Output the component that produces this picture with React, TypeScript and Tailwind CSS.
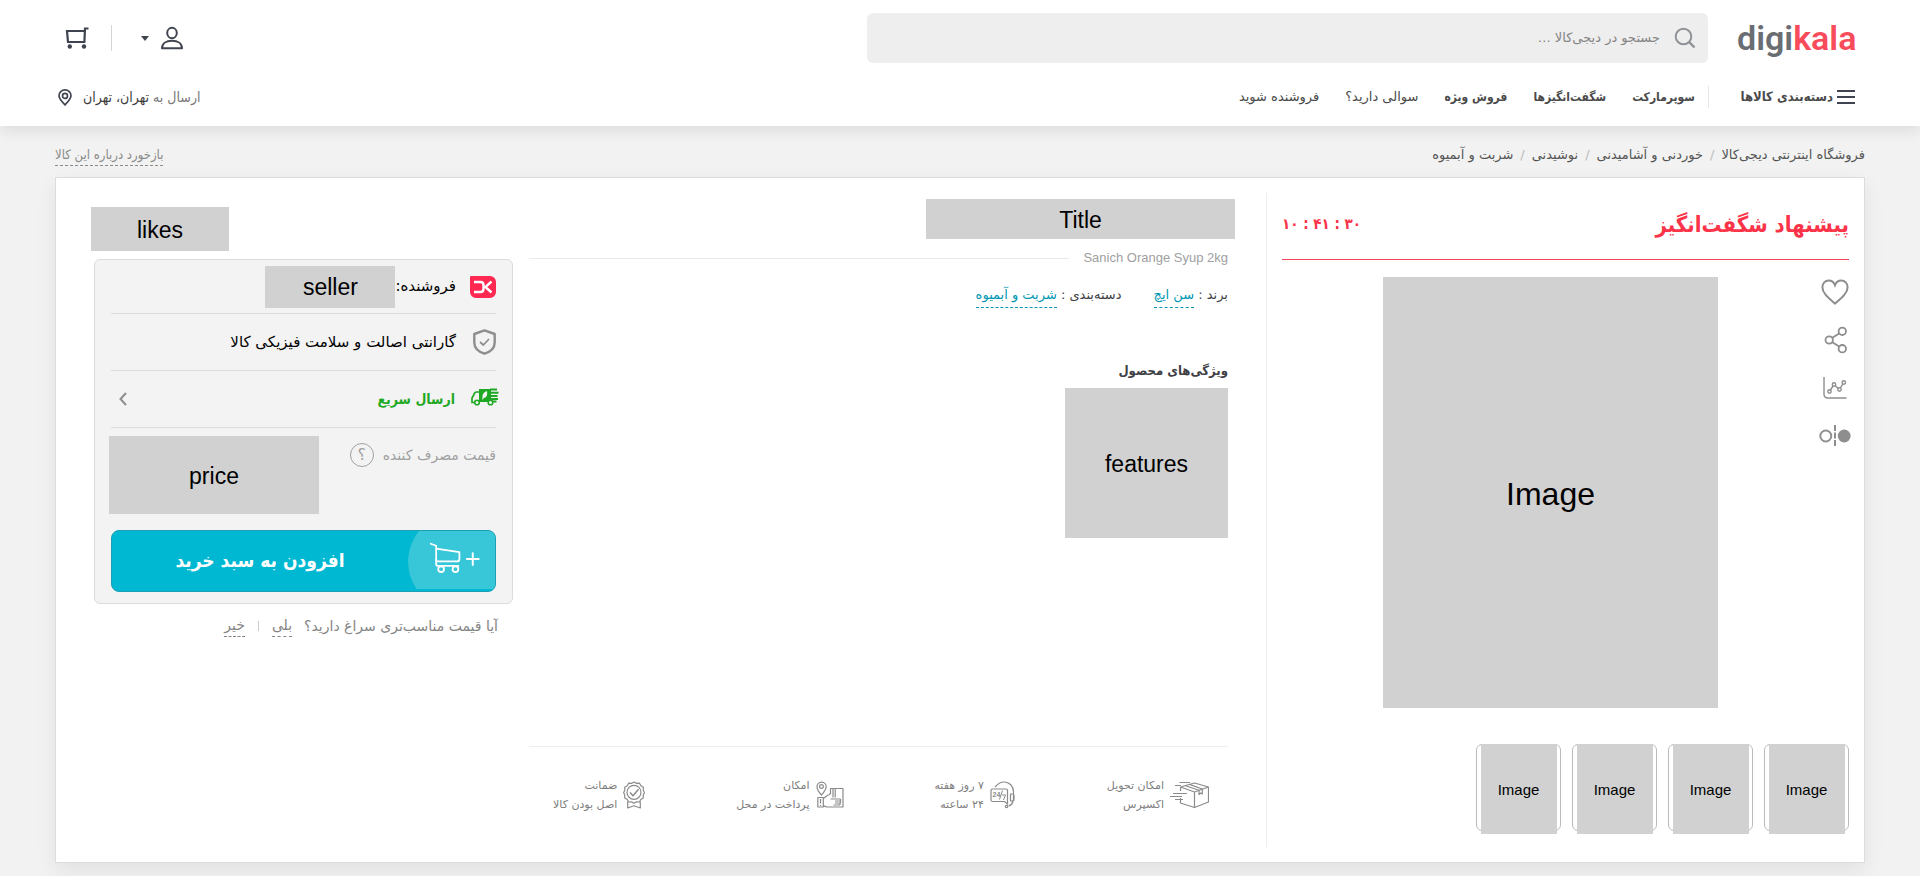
import React from "react";

const navLinks = [
  { label: "سوپرمارکت", bold: true },
  { label: "شگفت‌انگیزها", bold: true },
  { label: "فروش ویژه", bold: true },
  { label: "سوالی دارید؟", bold: false },
  { label: "فروشنده شوید", bold: false },
];

const crumbs = ["فروشگاه اینترنتی دیجی‌کالا", "خوردنی و آشامیدنی", "نوشیدنی", "شربت و آبمیوه"];

function SearchIcon() {
  return (
    <svg width="22" height="22" viewBox="0 0 22 22" fill="none" stroke="#8f9296" strokeWidth="2">
      <circle cx="9.5" cy="9.5" r="7.8" />
      <path d="M15.2 15.2 20.5 20.5" strokeWidth="2.4" />
    </svg>
  );
}

function UserIcon() {
  return (
    <svg width="24" height="24" viewBox="0 0 24 24" fill="none" stroke="#3f4450" strokeWidth="2">
      <ellipse cx="12" cy="7" rx="4.8" ry="5.2" />
      <path d="M2 22.2c0-4.6 4.2-7.4 10-7.4s10 2.8 10 7.4z" strokeLinejoin="round" />
    </svg>
  );
}

function CartIcon() {
  return (
    <svg width="24" height="24" viewBox="0 0 24 24" fill="none" stroke="#3f4450" strokeWidth="2.2">
      <path d="M23.5 2.5H20l-.6 13.5H3L2 5h18" />
      <circle cx="4.8" cy="20.5" r="2.2" fill="#3f4450" stroke="none" />
      <circle cx="19" cy="20.5" r="2.2" fill="#3f4450" stroke="none" />
    </svg>
  );
}

function PinIcon() {
  return (
    <svg width="14" height="17" viewBox="0 0 14 17" fill="none" stroke="#3f4450" strokeWidth="1.7">
      <path d="M7 15.8C3.5 12.2 1 9.6 1 6.7a6 5.8 0 0 1 12 0c0 2.9-2.5 5.5-6 9.1z" />
      <circle cx="7" cy="6.9" r="2.5" />
    </svg>
  );
}

function HeartIcon() {
  return (
    <svg width="28" height="26" viewBox="0 0 28 26" fill="none" stroke="#8e8e8e" strokeWidth="2">
      <path d="M14 24.6C8 19.4 1.4 14.5 1.4 8.2 1.4 4.3 4.2 1.5 7.7 1.5c3 0 5.2 1.8 6.3 4.7 1.1-2.9 3.3-4.7 6.3-4.7 3.5 0 6.3 2.8 6.3 6.7 0 6.3-6.6 11.2-12.6 16.4z" />
    </svg>
  );
}

function ShareIcon() {
  return (
    <svg width="24" height="28" viewBox="0 0 24 28" fill="none" stroke="#8e8e8e" strokeWidth="1.8">
      <circle cx="6.2" cy="14" r="3.7" />
      <circle cx="19.3" cy="5.3" r="3.7" />
      <circle cx="19.3" cy="22.7" r="3.7" />
      <path d="M9.3 11.8 16.2 7.4M9.3 16.2l6.9 4.4" />
    </svg>
  );
}

function ChartIcon() {
  return (
    <svg width="24" height="24" viewBox="0 0 24 24" fill="none" stroke="#8e8e8e" strokeWidth="1.4">
      <path d="M1 1v17.5A3.5 3.5 0 0 0 4.5 22H23.5" />
      <circle cx="6.5" cy="15.5" r="1.7" />
      <circle cx="11" cy="8.5" r="1.7" />
      <circle cx="16.5" cy="13.5" r="1.7" />
      <circle cx="20.8" cy="6.5" r="1.7" />
      <path d="M7.4 14 10.1 10M12.3 9.7l3 2.7M17.3 12l2.6-4.1" />
    </svg>
  );
}

function CompareIcon() {
  return (
    <svg width="32" height="28" viewBox="0 0 32 28" fill="none" stroke="#8e8e8e">
      <circle cx="6.8" cy="14" r="5.5" strokeWidth="1.9" />
      <circle cx="25.2" cy="14" r="6.4" fill="#8e8e8e" stroke="none" />
      <path d="M16 3v22" strokeWidth="2" strokeDasharray="6 1.5" />
    </svg>
  );
}

function BrandMark() {
  return (
    <svg width="26" height="22" viewBox="0 0 26 22">
      <path d="M0 1.2A1.2 1.2 0 0 1 1.2 0H20a6 6 0 0 1 6 6v10a6 6 0 0 1-6 6H6a6 6 0 0 1-6-6z" fill="#ff2850" />
      <path d="M4 6h6.5q3 0 3 3v4q0 3-3 3H4M21.5 5.5 15.5 11l6 5.5" fill="none" stroke="#fff" strokeWidth="2.4" />
    </svg>
  );
}

function ShieldIcon() {
  return (
    <svg width="23" height="26" viewBox="0 0 23 26" fill="none" stroke="#8e8e8e">
      <path d="M11.5 1.4 21.7 5v8.5c0 5.3-4.3 9.3-10.2 11.2C5.6 22.8 1.3 18.8 1.3 13.5V5z" strokeWidth="2.4" strokeLinejoin="round" />
      <path d="m7 13 3.3 3 5.7-6" strokeWidth="1.7" />
    </svg>
  );
}

function TruckIcon() {
  return (
    <svg className="-mr-[3px] mb-1" width="28" height="18" viewBox="0 0 28 18">
      <path d="M8 1h12v13H8z" fill="#1fa824" />
      <path d="M19 1.5h7M19 4.8h8.5M19 8h7.5M19 11h8M19 13.5h6.5" stroke="#1fa824" strokeWidth="1.9" />
      <path d="M9 4H5.5Q3.5 4 2.5 7.5L1 10v4.5h8" fill="none" stroke="#1fa824" strokeWidth="1.7" />
      <path d="M16 3Q11 4.5 11.5 9.5L11 12l2-2q4-1 3-7z" fill="#f3f3f3" />
      <circle cx="6" cy="14.5" r="2.3" fill="#f3f3f3" stroke="#1fa824" strokeWidth="1.6" />
      <circle cx="19.5" cy="14.5" r="2.3" fill="#f3f3f3" stroke="#1fa824" strokeWidth="1.6" />
    </svg>
  );
}

function BuyCartIcon() {
  return (
    <svg className="absolute inset-0 h-full w-full" viewBox="0 0 88 60" preserveAspectRatio="none" fill="none" stroke="#fff" strokeWidth="1.8" strokeLinejoin="round" strokeLinecap="round">
      <path d="M11 0A50 50 0 0 0 8.5 59H88V0z" fill="#38c6d9" stroke="none" />
      <path d="M23 13l5.500 2v14.500q0 1.500 1.500 1.500h19.500q2.500 0 2.500-2.500v-7L28.500 18" />
      <path d="M28.500 29v4.500q0 2 2 2H51" />
      <circle cx="33.500" cy="38.800" r="2.900" />
      <circle cx="48" cy="38.800" r="2.900" />
      <path d="M59.500 28.500h12M65.500 22.500v12" strokeWidth="2" />
    </svg>
  );
}

function ExpressIcon() {
  return (
    <svg width="39" height="28" viewBox="0 0 39 28" fill="none" stroke="#8b8b8b" strokeWidth="1.2" strokeLinejoin="round">
      <path d="M10.5 6 24.5 2l14 4v15l-14 5.5L10.5 22v-5M10.5 6l14 5 14-5M24.5 11v15.5M10.5 6v4" />
      <path d="M15.5 4.7 29 9.3v4.200l1.800-1.500 1.500 1V8L19.500 3.400" />
      <path d="M9.5 1.5H20M5 4.5h6M3 12.500h14M0 15.500h12M5 18.500h8" />
    </svg>
  );
}

function SupportIcon() {
  return (
    <svg width="26" height="28" viewBox="0 0 26 28" fill="none" stroke="#8b8b8b" strokeWidth="1.2">
      <path d="M5 6C8 2.5 11 1 14 1c5.5 0 9.5 4 9.5 10v9" />
      <path d="M1 9.500q0-1.500 1.500-1.500H16q1.500 0 1.500 1.500v13.500L14.500 20.500H2.500Q1 20.500 1 19z" />
      <path d="M20.5 13h1.500q2 0 2 2v3q0 2-2 2h-1.500zM23 20.500Q22 24 18.500 25" />
      <circle cx="16.5" cy="25.5" r="1.2" />
      <text x="2.5" y="15.5" direction="ltr" fontFamily="Liberation Sans" fontSize="7" fontWeight="700" fill="#8b8b8b" stroke="none">24</text>
      <path d="M12.5 9.5 9.5 18.5M12 14h3.500l-2 5" strokeWidth="1" />
    </svg>
  );
}

function PaymentIcon() {
  return (
    <svg width="28" height="28" viewBox="0 0 28 28" fill="none" stroke="#8b8b8b" strokeWidth="1.2" strokeLinejoin="round">
      <path d="M5.500 14C2.500 10.800 1 8.500 1 5.700a4.600 4.600 0 0 1 9.200 0c0 2.800-2 5.100-4.700 8.300z" />
      <circle cx="5.5" cy="5.5" r="1.9" />
      <path d="M1.800 16.500h5.500V26H1.800zM4.500 18v4.500M4.500 24v1M7.300 17.500l4-3 3-1.500M7.500 24.500q2 1.500 4 1.500H27V7.500H14.500V13M14.500 13h-1.500M17 7.500v9M19.200 7.500v9" />
      <path d="M14.500 18h9.500q1.500 1 0 2h-5M24 20q1.300 1 0 2h-5M23.500 22q1.300 1 0 2h-6" />
    </svg>
  );
}

function MedalIcon() {
  return (
    <svg width="22" height="28" viewBox="0 0 22 28" fill="none" stroke="#8b8b8b" strokeWidth="1.2" strokeLinejoin="round">
      <path d="M11 1l2.600 1.400 2.900-.2 1.400 2.600 2.500 1.500-.2 2.900L21.500 11.500l-1.300 2.500.1 3-2.500 1.500-1.400 2.500-3-.1L11 22.200 8.600 20.900l-3 .1-1.400-2.500-2.500-1.500.1-3L.6 11.500l1.300-2.300-.2-2.900 2.500-1.500 1.400-2.600 2.900.2z" />
      <circle cx="11" cy="11.3" r="7" />
      <path d="m7 11.5 3 3.2 5.5-6.5" strokeWidth="1.5" />
      <path d="M4.7 20.5V27L11 24.8 17.300 27v-6.500" />
    </svg>
  );
}

const services = [
  { icon: <ExpressIcon />, lines: ["امکان تحویل", "اکسپرس"] },
  { icon: <SupportIcon />, lines: ["۷ روز هفته", "۲۴ ساعته"] },
  { icon: <PaymentIcon />, lines: ["امکان", "پرداخت در محل"] },
  { icon: <MedalIcon />, lines: ["ضمانت", "اصل بودن کالا"] },
];

function Block({ className, children }: { className: string; children: React.ReactNode }) {
  return (
    <div className={`flex shrink-0 items-center justify-center bg-[#d1d1d1] pt-[2px] font-['Liberation_Sans'] text-black ${className}`}>
      {children}
    </div>
  );
}

function Header() {
  return (
    <header className="relative bg-white px-[65px] pt-[13px] shadow-[0_5px_14px_rgba(0,0,0,0.09)]">
      <div className="flex h-[50px] items-center">
        <a href="#" dir="ltr" className="w-[147px] pl-[29px] font-['Roboto'] text-[34px] leading-[40px] font-semibold text-[#6a6e73]">
          digi<span className="text-[#f84c5c]">kala</span>
        </a>
        <label className="flex h-full w-[47%] max-w-[841px] items-center gap-[14px] rounded-md bg-[#eee] pr-[12px] pl-4">
          <SearchIcon />
          <input
            type="search"
            aria-label="جستجو"
            placeholder="جستجو در دیجی‌کالا …"
            className="min-w-0 flex-1 bg-transparent font-['DejaVu_Sans',sans-serif] text-[13px] outline-none placeholder:text-[#858585]"
          />
        </label>
        <div className="mr-auto flex items-center">
          <button aria-label="حساب کاربری" className="flex items-center gap-[11px]">
            <UserIcon />
            <span className="h-0 w-0 border-x-4 border-t-[5px] border-x-transparent border-t-[#3f4450]" />
          </button>
          <span className="mr-[29px] ml-[22px] h-[26px] w-px bg-[#d5d5d5]" />
          <button aria-label="سبد خرید"><CartIcon /></button>
        </div>
      </div>
      <div className="flex h-[63px] items-center pt-[5px] text-[13px] text-[#4a4a4a]">
        <button className="flex w-[146px] items-center gap-1 font-bold">
          <svg width="18" height="14" viewBox="0 0 18 14" stroke="#3f4450" strokeWidth="1.8">
            <path d="M0 1h18M0 7h18M0 13h18" />
          </svg>
          دسته‌بندی کالاها
        </button>
        <nav className="flex h-[22px] items-center gap-[26px] border-r border-[#e6e6e6] pr-[13px]">
          {navLinks.map((l) => (
            <a key={l.label} href="#" className={l.bold ? "text-[12px] font-bold" : "font-['DejaVu_Sans',sans-serif]"}>{l.label}</a>
          ))}
        </nav>
        <button className="mr-auto -ml-[7px] flex items-center gap-[11px] text-[14px]">
          <span className="text-[#777]">
            ارسال به <span className="text-[#3c3c3c]">تهران، تهران</span>
          </span>
          <PinIcon />
        </button>
      </div>
    </header>
  );
}

function Gallery() {
  return (
    <section className="my-[15px] border-l border-[#eee] px-[15px] pb-4">
      <div className="flex h-[67px] items-center justify-between border-b border-[#f5455c] pb-[3px] text-[#fb3449]">
        <h2 className="text-[22px] leading-7 font-bold">پیشنهاد شگفت‌انگیز</h2>
        <span dir="ltr" className="text-[15px] font-bold">۱۰ : ۴۱ : ۳۰</span>
      </div>
      <div className="flex pt-[17px]">
        <div className="-mr-[2px] flex w-8 flex-col items-center gap-[19px]">
          <button aria-label="علاقه‌مندی" className="flex h-[29px] items-center"><HeartIcon /></button>
          <button aria-label="اشتراک‌گذاری" className="flex h-[29px] items-center"><ShareIcon /></button>
          <button aria-label="نمودار قیمت" className="flex h-[29px] items-center"><ChartIcon /></button>
          <button aria-label="مقایسه" className="flex h-[29px] items-center"><CompareIcon /></button>
        </div>
        <div className="flex flex-1 justify-center">
          <Block className="h-[431px] w-[335px] text-[32px]">Image</Block>
        </div>
      </div>
      <div className="mt-9 flex gap-[11px]">
        {[1, 2, 3, 4].map((n) => (
          <button key={n} className="flex h-[87px] w-[85px] justify-center rounded-md border border-[#bbb]">
            <Block className="-mt-px h-[90px] w-[76px] text-[15px]">Image</Block>
          </button>
        ))}
      </div>
    </section>
  );
}

const dashedLink = "inline-block border-b border-dashed border-[#0097b2] text-[#0097b2]";

function Details() {
  return (
    <section className="flex flex-col pr-[38px] font-['DejaVu_Sans',sans-serif] text-[#3f3f46]">
      <div className="-mr-[7px] mt-[21px]">
        <Block className="h-10 w-[309px] text-[23px]">Title</Block>
      </div>
      <div className="mt-[9px] flex items-center gap-[14px]">
        <span dir="ltr" className="pb-px font-['Liberation_Sans'] text-[13px] leading-5 text-[#a0a0a0]">Sanich Orange Syup 2kg</span>
        <span className="h-px flex-1 bg-[#eaeaea]" />
      </div>
      <div className="mt-[14px] flex gap-8 text-[13px] leading-6">
        <span>برند : <a href="#" className={dashedLink}>سن ایچ</a></span>
        <span>دسته‌بندی : <a href="#" className={dashedLink}>شربت و آبمیوه</a></span>
      </div>
      <h3 className="mt-[51px] font-['DejaVu_Sans_Condensed',sans-serif] text-[13px] leading-6 font-bold">ویژگی‌های محصول</h3>
      <Block className="mt-[5px] h-[150px] w-[163px] text-[23px]">features</Block>
      <ul className="mt-auto mb-12 flex justify-between border-t border-[#eee] pt-[29px] pr-[19px] pl-6 text-[11px] leading-[19px] text-[#7d7d7d]">
        {services.map((s) => (
          <li key={s.lines[0]} className="flex items-center gap-[6px]">
            {s.icon}
            <span>{s.lines[0]}<br />{s.lines[1]}</span>
          </li>
        ))}
      </ul>
    </section>
  );
}

function BuyBox() {
  return (
    <section className="pr-4 pl-[38px] font-['DejaVu_Sans',sans-serif]">
      <div className="mt-[29px] -ml-[3px] flex justify-end">
        <Block className="h-11 w-[138px] text-[23px]">likes</Block>
      </div>
      <div className="mt-2 rounded-md border border-[#dcdcdc] bg-[#f3f3f3] px-4 pb-[11px] text-[15px] text-black">
        <div className="flex h-[54px] items-center border-b border-[#dcdcdc]">
          <BrandMark />
          <span className="mr-[14px]">فروشنده:</span>
          <Block className="h-[42px] w-[130px] text-[23px]">seller</Block>
        </div>
        <div className="flex h-[57px] items-center gap-[17px] border-b border-[#dcdcdc]">
          <ShieldIcon />
          <span>گارانتی اصالت و سلامت فیزیکی کالا</span>
        </div>
        <button className="flex h-[57px] w-full items-center border-b border-[#dcdcdc] font-['DejaVu_Sans_Condensed',sans-serif] text-[14px] font-bold text-[#1fa824]">
          <TruckIcon />
          <span className="mr-4">ارسال سریع</span>
          <svg className="mr-auto ml-2" width="8" height="14" viewBox="0 0 8 14" fill="none" stroke="#8e8e8e" strokeWidth="2">
            <path d="M7 1 1.500 7 7 13" />
          </svg>
        </button>
        <div className="flex justify-between pt-2">
          <div className="flex h-[38px] items-center gap-[9px] text-[14px] text-[#a0a0a0]">
            قیمت مصرف کننده
            <span className="flex h-6 w-6 items-center justify-center rounded-full border border-[#a0a0a0] text-[16px]">؟</span>
          </div>
          <Block className="-ml-[2px] h-[78px] w-[210px] text-[23px]">price</Block>
        </div>
        <button className="mt-4 flex h-[62px] w-full overflow-hidden rounded-lg border border-[#1c9fb3] bg-[#00b8d1] pb-px font-['DejaVu_Sans_Condensed',sans-serif] text-[19px] font-bold text-white">
          <span className="relative h-full w-[87px]"><BuyCartIcon /></span>
          <span className="flex-1 self-center">افزودن به سبد خرید</span>
        </button>
      </div>
      <div className="mt-[10px] flex items-center pr-[15px] text-[14px] leading-[22px] text-[#858585]">
        <span>آیا قیمت مناسب‌تری سراغ دارید؟</span>
        <a href="#" className="mr-3 border-b border-dashed border-[#858585]">بلی</a>
        <span className="mx-[13px] h-[10px] w-px bg-[#ccc]" />
        <a href="#" className="border-b border-dashed border-[#858585]">خیر</a>
      </div>
    </section>
  );
}

export default function App() {
  return (
    <div dir="rtl" className="min-h-screen bg-[#f2f2f2] pb-[13px] font-['DejaVu_Sans_Condensed','DejaVu_Sans',sans-serif]">
      <Header />
      <main className="px-[55px]">
        <div className="flex h-[51px] items-center justify-between pt-[6px] text-[13px]">
          <nav className="flex gap-[7px] font-['DejaVu_Sans',sans-serif] text-[#555]">
            {crumbs.map((c, i) => (
              <React.Fragment key={c}>
                {i > 0 && <span className="text-[#bbb]">/</span>}
                <a href="#">{c}</a>
              </React.Fragment>
            ))}
          </nav>
          <a href="#" className="border-b border-dashed border-[#8a8a8a] leading-[21px] text-[#8a8a8a]">بازخورد درباره این کالا</a>
        </div>
        <div className="grid grid-cols-[minmax(0,598fr)_minmax(0,737fr)_minmax(0,473fr)] border border-[#dcdcdc] bg-white shadow-[0_8px_20px_rgba(0,0,0,0.07)]">
          <Gallery />
          <Details />
          <BuyBox />
        </div>
      </main>
    </div>
  );
}
